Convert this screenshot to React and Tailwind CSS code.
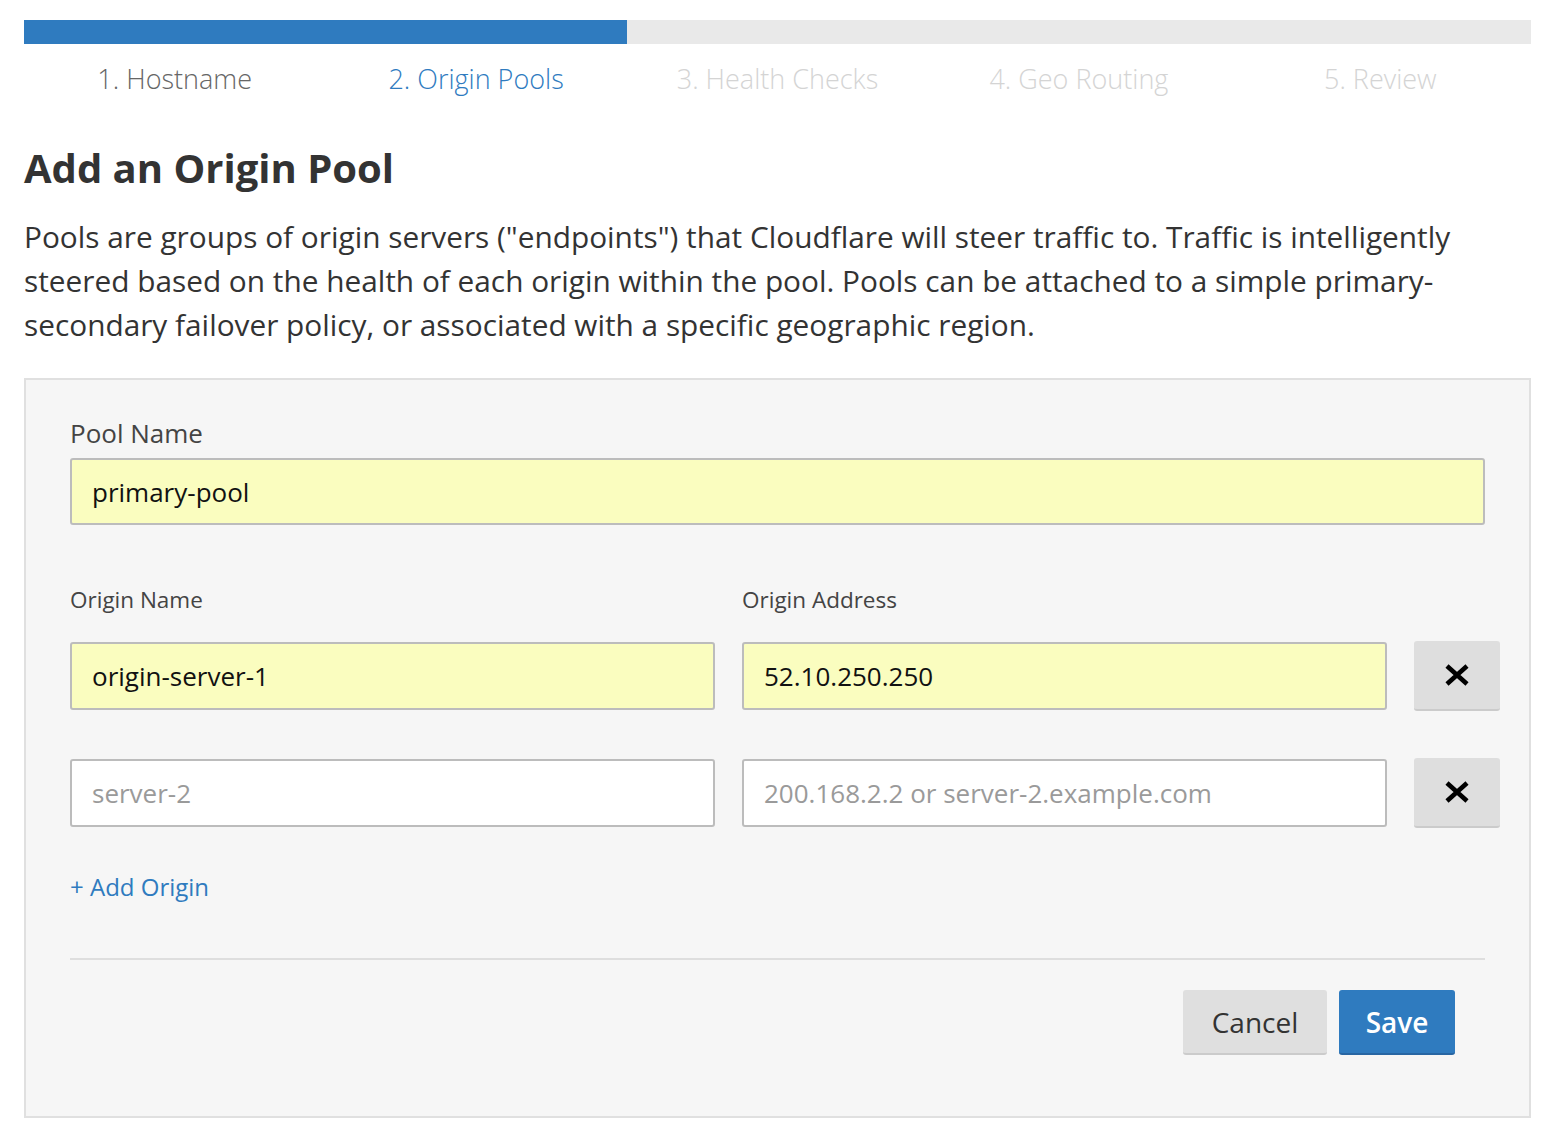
import React from 'react';

const steps = [
  { label: '1. Hostname', state: 'done' },
  { label: '2. Origin Pools', state: 'active' },
  { label: '3. Health Checks', state: 'todo' },
  { label: '4. Geo Routing', state: 'todo' },
  { label: '5. Review', state: 'todo' },
];

function RemoveIcon() {
  return (
    <svg width="26" height="22" viewBox="0 0 26 22" fill="none">
      <path d="M3 2 L23 20 M23 2 L3 20" stroke="#000" strokeWidth="4.6" />
    </svg>
  );
}

function TextInput({ value, placeholder, filled }) {
  return (
    <input
      readOnly
      defaultValue={value}
      placeholder={placeholder}
      className={`h-[68px] w-full rounded-[3px] border-2 border-[#bcbcbc] px-5 text-[26px] text-[#111] outline-none placeholder:text-[#9a9a9a] ${
        filled ? 'bg-[#fafdbf]' : 'bg-white'
      }`}
    />
  );
}

function OriginRow({ name, address, namePlaceholder, addressPlaceholder }) {
  return (
    <div className="grid w-[1429px] grid-cols-[645px_645px_86px] items-center gap-x-[27px]">
      <TextInput value={name} placeholder={namePlaceholder} filled={!!name} />
      <TextInput value={address} placeholder={addressPlaceholder} filled={!!address} />
      <button className="flex h-[70px] w-[86px] items-center justify-center rounded-[3px] border-b-2 border-[#cbcbcb] bg-[#dedede]">
        <RemoveIcon />
      </button>
    </div>
  );
}

export default function App() {
  return (
    <div className="min-h-screen bg-white pl-6 pr-[29px] pt-5 font-['Open_Sans',sans-serif] text-[#333]">
      {/* Progress */}
      <div className="h-6 w-full bg-[#e9e9e9]">
        <div className="h-full w-[40%] bg-[#2f7bbf]" />
      </div>
      <div className="mt-[17px] grid grid-cols-5 text-center text-[27px] font-light leading-[36px]">
        {steps.map((s) => (
          <div
            key={s.label}
            className={
              s.state === 'active'
                ? 'text-[#2f7bbf]'
                : s.state === 'done'
                ? 'text-[#666]'
                : 'text-[#d4d4d4]'
            }
          >
            {s.label}
          </div>
        ))}
      </div>

      {/* Intro */}
      <h1 className="mt-[47px] text-[40px] font-bold leading-[48px] text-[#333]">Add an Origin Pool</h1>
      <p className="mt-[23px] text-[29.8px] leading-[44px] text-[#333]">
        Pools are groups of origin servers ("endpoints") that Cloudflare will steer traffic to. Traffic is intelligently
        <br />
        steered based on the health of each origin within the pool. Pools can be attached to a simple primary-
        <br />
        secondary failover policy, or associated with a specific geographic region.
      </p>

      {/* Form panel */}
      <div className="mt-[31px] border-2 border-[#e0e0e0] bg-[#f6f6f6] pb-[61px] pl-[44px] pr-[44px] pt-[35px]">
        <label className="block text-[26px] leading-[36px] text-[#444]">Pool Name</label>
        <div className="mt-[7px]">
          <input
            readOnly
            defaultValue="primary-pool"
            className="h-[67px] w-full rounded-[3px] border-2 border-[#bcbcbc] bg-[#fafdbf] px-5 text-[26px] text-[#111] outline-none"
          />
        </div>

        <div className="mt-[60px] grid grid-cols-[645px_645px] gap-x-[27px] text-[22.5px] leading-[30px] text-[#444]">
          <span>Origin Name</span>
          <span>Origin Address</span>
        </div>

        <div className="mt-[26px] flex flex-col gap-[47px]">
          <OriginRow name="origin-server-1" address="52.10.250.250" />
          <OriginRow namePlaceholder="server-2" addressPlaceholder="200.168.2.2 or server-2.example.com" />
        </div>

        <button className="mt-[43px] block text-[24px] leading-[32px] text-[#2f7bbf]">+ Add Origin</button>

        <div className="mt-[55px] h-[2px] w-full bg-[#dedede]" />

        <div className="mt-[30px] flex justify-end gap-3 pr-[30px]">
          <button className="h-[65px] w-[144px] rounded-[3px] border-b-2 border-[#cbcbcb] bg-[#dfdfdf] text-[28px] text-[#333]">
            Cancel
          </button>
          <button className="h-[65px] w-[116px] rounded-[3px] border-b-2 border-[#2866a3] bg-[#2f7bbf] text-[28px] font-semibold text-white">
            Save
          </button>
        </div>
      </div>
    </div>
  );
}
